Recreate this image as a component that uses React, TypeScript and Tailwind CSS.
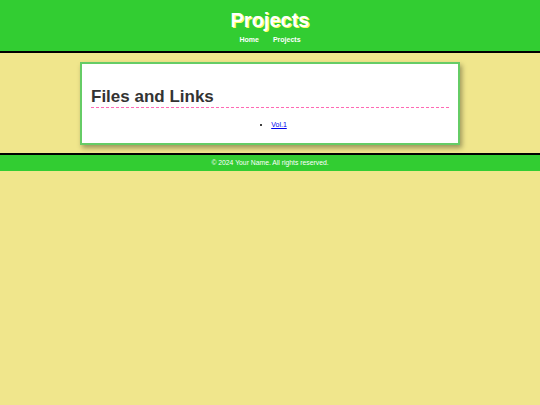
export default function App() {
  return (
    <div className="min-h-[405px] bg-[#f0e68c] font-['Liberation_Sans',Arial,sans-serif]">
      <header className="flex h-[53px] flex-col items-center border-b-[2px] border-black bg-[#32cd32] pt-[8px] text-white">
        <h1 className="text-[20px] font-bold leading-[24px] [text-shadow:1px_1px_0_#ffff66]">
          Projects
        </h1>
        <nav className="mt-[3px] flex gap-[14px] text-[7px] font-bold leading-[9px]">
          <a href="#">Home</a>
          <a href="#">Projects</a>
        </nav>
      </header>

      <main className="px-[80px] pt-[9px] pb-[8px]">
        <section className="h-[83px] border-2 border-[#66cc66] bg-white px-[9px] pt-[23px] shadow-[2px_3px_5px_rgba(0,0,0,0.35)]">
          <h2 className="border-b border-dashed border-[#ff69b4] pb-[1px] text-[17px] font-bold leading-[19px] text-[#333]">
            Files and Links
          </h2>
          <ul className="mt-[12px] flex justify-center text-[7px] leading-[10px]">
            <li className="ml-[18px] list-disc">
              <a href="#" className="text-[#0000ee] underline">
                Vol.1
              </a>
            </li>
          </ul>
        </section>
      </main>

      <footer className="border-t-[2px] border-black bg-[#32cd32] py-[3px] text-center text-[6.8px] leading-[10px] text-white">
        © 2024 Your Name. All rights reserved.
      </footer>
    </div>
  );
}
